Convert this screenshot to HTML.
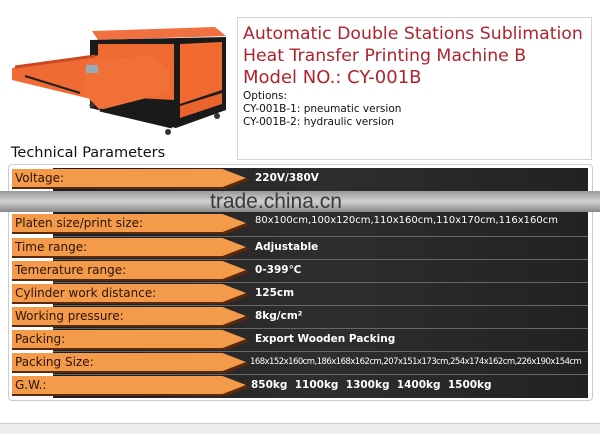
<!DOCTYPE html>
<html><head><meta charset="utf-8"><style>
*{margin:0;padding:0;box-sizing:border-box}
body{width:600px;height:434px;background:#fff;position:relative;overflow:hidden;font-family:"DejaVu Sans","Liberation Sans",sans-serif}
.box{position:absolute;left:237px;top:17px;width:355px;height:143px;border:1px solid #d4d4d4}
.t{position:absolute;left:243px;color:#b0232e;font-size:17.3px;white-space:nowrap}
.o{position:absolute;left:243px;font-size:10.5px;color:#111;white-space:nowrap}
.h{position:absolute;left:11px;top:145px;font-size:14.5px;color:#111}
.tbl{position:absolute;left:8px;top:164px;width:585px;height:237px;border:1px solid #ccc;border-radius:4px;background:#fff}
.dark{position:absolute;left:53px;top:168px;width:535px;height:230px;background:linear-gradient(90deg,#1e1e1e,#2e2e2e 50%,#222)}
.row{position:absolute;left:0;width:600px;height:22px}
.row .ar{position:absolute;left:12px;top:2px;width:234px;height:18px;background:#f39a4b;clip-path:polygon(0 0,90% 0,100% 50%,90% 100%,0 100%)}
.row .ar2{position:absolute;left:12px;top:4px;width:238px;height:18px;background:#5a2a0e;clip-path:polygon(0 0,90% 0,100% 50%,90% 100%,0 100%)}
.row .l{position:absolute;left:15px;top:4px;font-size:12px;color:#2a1405}
.row .v{position:absolute;left:255px;top:5px;font-size:10.5px;color:#fff;font-weight:bold;white-space:nowrap}
.sep{position:absolute;left:53px;width:535px;height:1px;background:#666}
.wm{position:absolute;left:0;top:191px;width:600px;height:21px;background:linear-gradient(180deg,#999,#d0d0d0 50%,#888)}
.wmt{position:absolute;left:210px;top:190px;font-size:21px;color:#3a3a3a;font-family:"Liberation Sans",sans-serif}
.bot{position:absolute;left:0;top:423px;width:600px;height:11px;background:#eee;border-top:1px solid #ccc}
</style></head><body>
<svg style="position:absolute;left:0;top:0" width="235" height="140" viewBox="0 0 235 140">
<polygon points="92,31 215,27 226,36 98,40" fill="#f07040"/>
<polygon points="90,40 226,37 226,110 176,128 90,108" fill="#1a1a1a"/>
<polygon points="98,44 174,44 174,100 98,96" fill="#ee6a30"/>
<polygon points="180,44 222,42 222,90 180,104" fill="#f16a30"/>
<polygon points="180,106 222,93 222,104 180,118" fill="#e8642c"/>
<polygon points="12,68 100,55 145,65 145,85 95,100 12,80" fill="#ef6a35"/>
<polygon points="85,62 150,55 170,70 170,92 100,110 85,95" fill="#f07038"/>
<line x1="25" y1="76" x2="80" y2="93" stroke="#222" stroke-width="2"/>
<line x1="15" y1="67" x2="95" y2="56" stroke="#c94a20" stroke-width="3"/>
<rect x="86" y="65" width="12" height="8" fill="#9ab"/>
<line x1="100" y1="110" x2="172" y2="127" stroke="#1a1a1a" stroke-width="3"/>
<circle cx="168" cy="132" r="3" fill="#333"/><circle cx="217" cy="116" r="3" fill="#333"/><circle cx="92" cy="105" r="2.5" fill="#333"/>
</svg>
<div class="box"></div>
<div class="t" style="top:24px">Automatic Double Stations Sublimation</div>
<div class="t" style="top:46px">Heat Transfer Printing Machine B</div>
<div class="t" style="top:67px;font-size:18px">Model NO.: CY-001B</div>
<div class="o" style="top:90px">Options:</div>
<div class="o" style="top:103px">CY-001B-1: pneumatic version</div>
<div class="o" style="top:116px">CY-001B-2: hydraulic version</div>
<div class="h">Technical Parameters</div>
<div class="tbl"></div>
<div class="dark"></div>
<div class="row" style="top:167px"><div class="ar2"></div><div class="ar"></div><div class="l">Voltage:</div><div class="v">220V/380V</div></div>
<div class="wm"></div><div class="wmt">trade.china.cn</div>
<div class="row" style="top:212px"><div class="ar2"></div><div class="ar"></div><div class="l">Platen size/print size:</div><div class="v" style="font-weight:normal;font-size:10px;top:3px">80x100cm,100x120cm,110x160cm,110x170cm,116x160cm</div></div>
<div class="sep" style="top:236px"></div>
<div class="row" style="top:236px"><div class="ar2"></div><div class="ar"></div><div class="l">Time range:</div><div class="v">Adjustable</div></div>
<div class="sep" style="top:259px"></div>
<div class="row" style="top:259px"><div class="ar2"></div><div class="ar"></div><div class="l">Temerature range:</div><div class="v">0-399℃</div></div>
<div class="sep" style="top:282px"></div>
<div class="row" style="top:282px"><div class="ar2"></div><div class="ar"></div><div class="l">Cylinder work distance:</div><div class="v">125cm</div></div>
<div class="sep" style="top:305px"></div>
<div class="row" style="top:305px"><div class="ar2"></div><div class="ar"></div><div class="l">Working pressure:</div><div class="v">8kg/cm²</div></div>
<div class="sep" style="top:328px"></div>
<div class="row" style="top:328px"><div class="ar2"></div><div class="ar"></div><div class="l">Packing:</div><div class="v">Export Wooden Packing</div></div>
<div class="sep" style="top:351px"></div>
<div class="row" style="top:351px"><div class="ar2"></div><div class="ar"></div><div class="l">Packing Size:</div><div class="v" style="left:250px;font-size:8.5px;letter-spacing:-0.55px;top:6px;font-weight:normal">168x152x160cm,186x168x162cm,207x151x173cm,254x174x162cm,226x190x154cm</div></div>
<div class="sep" style="top:374px"></div>
<div class="row" style="top:374px"><div class="ar2"></div><div class="ar"></div><div class="l">G.W.:</div><div class="v" style="left:251px">850kg&nbsp; 1100kg&nbsp; 1300kg&nbsp; 1400kg&nbsp; 1500kg</div></div>
<div class="bot"></div>
</body></html>
